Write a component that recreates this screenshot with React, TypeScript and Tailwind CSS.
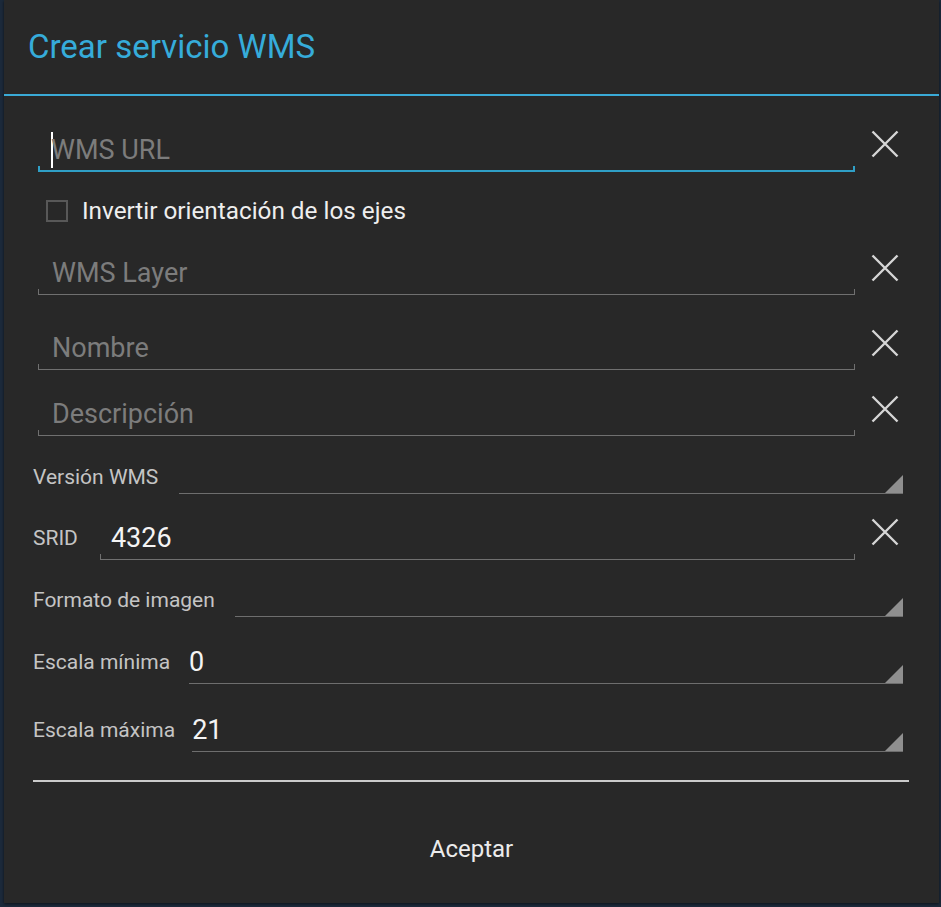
const font = { fontFamily: "Roboto, 'Noto Sans', sans-serif" };

const ClearIcon = () => (
  <svg width="28" height="28" viewBox="0 0 28 28" className="shrink-0">
    <path d="M1.5 1.5 L26.5 26.5 M26.5 1.5 L1.5 26.5" stroke="#d6d6d6" strokeWidth="2.4" />
  </svg>
);

const Triangle = () => (
  <svg width="18" height="18" viewBox="0 0 18 18" className="shrink-0">
    <polygon points="18,0 18,18 0,18" fill="#8f8f8f" />
  </svg>
);

type FieldProps = {
  text: string;
  placeholder?: boolean;
  focused?: boolean;
  pad?: string;
};

const Field = ({ text, placeholder, focused, pad = "pl-[14px]" }: FieldProps) => (
  <div className="flex-1 flex flex-col">
    <div
      className={`h-[32px] flex items-center text-[27px] leading-[32px] ${pad} ${
        placeholder ? "text-[#7c7c7c]" : "text-[#f4f4f4]"
      }`}
    >
      {focused && <span className="w-[2px] h-[36px] bg-white -mr-[2px] -ml-[1px]" />}
      {text}
    </div>
    <div
      className={
        focused
          ? "h-[6px] border-x-2 border-b-2 border-[#2f9fc6]"
          : "h-[6px] border-x border-b border-[#707070]"
      }
    />
  </div>
);

const Spinner = ({ value }: { value?: string }) => (
  <div className="flex-1 flex items-end border-b border-[#6e6e6e]">
    <div className="flex-1 text-[27px] leading-[32px] text-[#f4f4f4] pb-[5px]">{value}</div>
    <Triangle />
  </div>
);

export default function App() {
  return (
    <div className="w-[941px] h-[907px] bg-[#1c2a3b]" style={font}>
      <div className="ml-[4px] w-[935px] h-[903px] bg-[#282828] flex flex-col shadow-[0_1px_3px_rgba(0,0,0,0.6)]">
        <div className="h-[94px] flex items-center pl-[24px] text-[33px] text-[#36acda]">
          Crear servicio WMS
        </div>
        <div className="h-[2px] bg-[#3aaad6]" />

        {/* WMS URL */}
        <div className="mt-[38px] flex items-start pl-[34px] pr-[24px]">
          <Field text="WMS URL" placeholder focused />
          <div className="w-[60px] flex justify-center -mt-[4px]">
            <ClearIcon />
          </div>
        </div>

        {/* checkbox */}
        <div className="mt-[24px] h-[30px] flex items-center pl-[42px]">
          <div className="w-[22px] h-[22px] border-2 border-[#585858]" />
          <span className="ml-[14px] text-[24.3px] text-[#eeeeee]">Invertir orientación de los ejes</span>
        </div>

        <div className="mt-[31px] flex items-start pl-[34px] pr-[24px]">
          <Field text="WMS Layer" placeholder />
          <div className="w-[60px] flex justify-center -mt-[3px]">
            <ClearIcon />
          </div>
        </div>

        <div className="mt-[37px] flex items-start pl-[34px] pr-[24px]">
          <Field text="Nombre" placeholder />
          <div className="w-[60px] flex justify-center -mt-[3px]">
            <ClearIcon />
          </div>
        </div>

        <div className="mt-[28px] flex items-start pl-[34px] pr-[24px]">
          <Field text="Descripción" placeholder />
          <div className="w-[60px] flex justify-center -mt-[3px]">
            <ClearIcon />
          </div>
        </div>

        {/* Versión WMS */}
        <div className="mt-[26px] h-[32px] flex items-end pl-[29px] pr-[36px]">
          <span className="self-center text-[21px] text-[#c4c4c4] mr-[21px]">Versión WMS</span>
          <Spinner />
        </div>

        {/* SRID */}
        <div className="mt-[28px] flex items-start pl-[29px] pr-[24px]">
          <span className="text-[21px] leading-[32px] text-[#c4c4c4] mr-[22px]">SRID</span>
          <Field text="4326" pad="pl-[11px]" />
          <div className="w-[60px] flex justify-center -mt-[4px]">
            <ClearIcon />
          </div>
        </div>

        {/* Formato */}
        <div className="mt-[25px] h-[32px] flex items-end pl-[29px] pr-[36px]">
          <span className="self-center text-[21px] text-[#c4c4c4] mr-[20px]">Formato de imagen</span>
          <Spinner />
        </div>

        {/* Escala mínima */}
        <div className="mt-[29px] flex items-start pl-[29px] pr-[36px]">
          <span className="text-[21px] leading-[32px] text-[#c4c4c4] mr-[19px]">Escala mínima</span>
          <Spinner value="0" />
        </div>

        {/* Escala máxima */}
        <div className="mt-[30px] flex items-start pl-[29px] pr-[36px]">
          <span className="text-[21px] leading-[32px] text-[#c4c4c4] mr-[17px]">Escala máxima</span>
          <Spinner value="21" />
        </div>

        <div className="mt-[28px] mx-[29px] w-[876px] h-[2px] bg-[#cbcbcb]" />

        <div className="mt-[51px] text-center text-[24px] leading-[32px] text-[#ececec]">Aceptar</div>
      </div>
    </div>
  );
}
